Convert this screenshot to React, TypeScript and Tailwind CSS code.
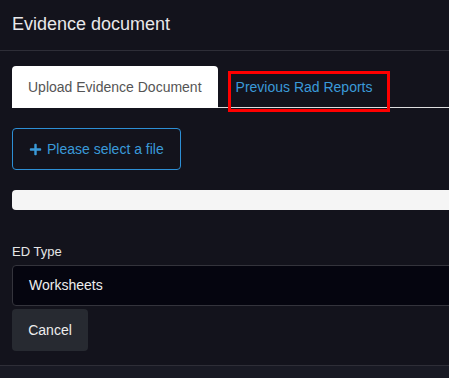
import { FaPlus } from "react-icons/fa";

export default function App() {
  return (
    <div className="w-[449px] h-[378px] overflow-hidden bg-[#13131c] font-['Liberation_Sans',Arial,sans-serif]">
      <div className="w-[640px]">
        <div className="h-[51px] border-b border-[#2e2e37] px-3 flex items-center">
          <h4 className="text-[18px] text-[#e8e8ea] leading-none -mt-[2px]">Evidence document</h4>
        </div>

        <div className="px-3 pt-[15px] h-[315px] border-b border-[#2e2e37]">
          <ul className="flex border-b border-[#dedede] h-[42px]">
            <li className="bg-white rounded-t-[4px] px-4 h-[42px] flex items-center text-[14px] text-[#555] mr-[2px]">
              Upload Evidence Document
            </li>
            <li className="relative px-4 h-[42px] flex items-center text-[14px] text-[#3a9ad9]">
              Previous Rad Reports
              <span className="absolute left-[8px] top-[5px] w-[162px] h-[41px] border-[3px] border-[#ff0000]" />
            </li>
          </ul>

          <div className="pt-[20px]">
            <button className="h-[42px] px-4 flex items-center gap-[5px] border border-[#2d8fd5] rounded-[4px] text-[14px] text-[#3a9ad9]">
              <FaPlus className="w-[13px] h-[13px]" />
              Please select a file
            </button>
          </div>

          <div className="mt-[20px] h-[20px] bg-[#f5f5f5] rounded-[4px]" />

          <label className="block mt-[34px] text-[13px] text-[#e6e6e6] leading-[16px]">ED Type</label>
          <div className="mt-[5px] h-[41px] bg-[#05050f] border border-[#34343c] rounded-[4px] flex items-center px-4 text-[14px] text-[#eee]">
            Worksheets
          </div>
          <button className="mt-[3px] h-[42px] w-[76px] bg-[#272a31] rounded-[4px] text-[14px] text-[#eee]">
            Cancel
          </button>
        </div>

        <div className="h-[20px] bg-[#191a24]" />
      </div>
    </div>
  );
}
